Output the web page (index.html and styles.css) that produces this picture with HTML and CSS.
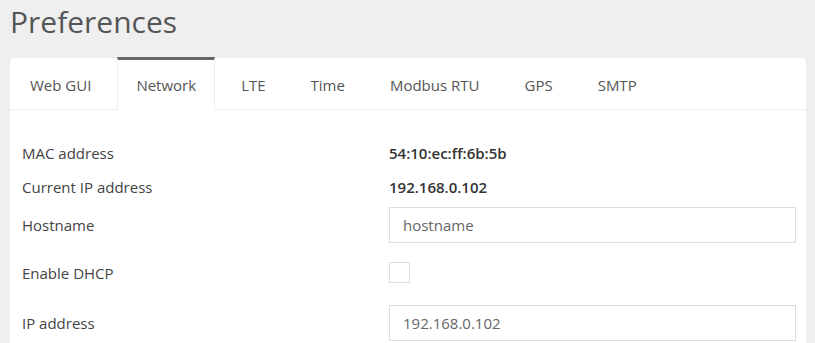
FILE: index.html
```html
<!DOCTYPE html>
<html lang="en">
<head>
  <meta charset="UTF-8" />
  <title>Preferences</title>
  <link rel="stylesheet" href="styles.css">
</head>
<body>
  <h1 class="page-title">Preferences</h1>

  <div class="card">
    <ul class="tabs">
      <li class="tab">Web GUI</li>
      <li class="tab active">Network</li>
      <li class="tab">LTE</li>
      <li class="tab">Time</li>
      <li class="tab">Modbus RTU</li>
      <li class="tab">GPS</li>
      <li class="tab">SMTP</li>
    </ul>

    <div class="form">
      <div class="row">
        <label class="label">MAC address</label>
        <div class="value">54:10:ec:ff:6b:5b</div>
      </div>
      <div class="row">
        <label class="label">Current IP address</label>
        <div class="value">192.168.0.102</div>
      </div>
      <div class="row row-input">
        <label class="label">Hostname</label>
        <div class="field"><input type="text" class="text-input" value="hostname"></div>
      </div>
      <div class="row row-check">
        <label class="label">Enable DHCP</label>
        <div class="field"><span class="checkbox"></span></div>
      </div>
      <div class="row row-last">
        <label class="label">IP address</label>
        <div class="field"><input type="text" class="text-input" value="192.168.0.102"></div>
      </div>
    </div>
  </div>
</body>
</html>
```

FILE: styles.css
```css
* {
  margin: 0;
  padding: 0;
  box-sizing: border-box;
}

body {
  background: #efefef;
  font-family: 'Open Sans', sans-serif;
  color: #555;
  padding: 0 9px 0 10px;
  overflow: hidden;
}

.page-title {
  font-size: 30px;
  font-weight: 400;
  color: #555;
  height: 58px;
  line-height: 44px;
}

.card {
  background: #fff;
  border-radius: 3px 3px 0 0;
  height: 300px;
}

.tabs {
  list-style: none;
  display: flex;
  gap: 7px;
  height: 52px;
  padding-left: 1px;
  border-bottom: 1px solid #eee;
}

.tab {
  font-size: 15px;
  color: #555;
  padding: 0 18px;
  line-height: 51px;
  height: 52px;
  border: 1px solid transparent;
  border-top: 3px solid transparent;
  border-bottom: none;
  margin-top: -1px;
}

.tab.active {
  border-color: #eee;
  border-top-color: #666;
  background: #fff;
  height: 53px;
}

.form {
  padding: 26px 10px 0 12px;
}

.row {
  display: flex;
  align-items: center;
  height: 34px;
  font-size: 15px;
}

.row-input {
  height: 42px;
}

.row-check {
  height: 53px;
}

.row-last {
  height: 48px;
}

.label {
  width: 367px;
  color: #444;
}

.value {
  font-weight: 600;
  color: #333;
}

.field {
  flex: 1;
  display: flex;
}

.text-input {
  width: 100%;
  height: 36px;
  border: 1px solid #ddd;
  padding: 0 13px;
  font-family: 'Open Sans', sans-serif;
  font-size: 15px;
  color: #666;
  outline: none;
}

.checkbox {
  width: 21px;
  height: 21px;
  border: 1px solid #ddd;
}
```
